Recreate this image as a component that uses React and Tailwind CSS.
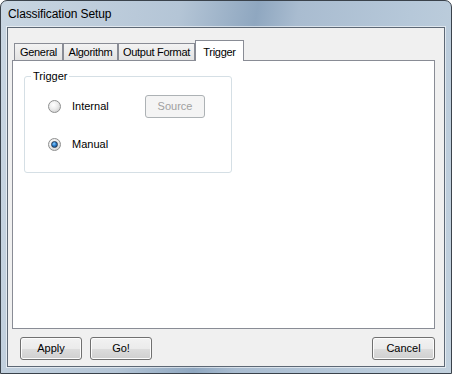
import React from 'react';

const font = { fontFamily: '"Liberation Sans", Arial, sans-serif' };

const Radio = ({ checked }) => (
  <div className="w-[13px] h-[13px] rounded-full border border-[#8e8f8f] bg-[radial-gradient(circle_at_40%_35%,#ffffff_0%,#ececec_45%,#c4c4c4_100%)] flex items-center justify-center shrink-0">
    {checked && (
      <div className="w-[7px] h-[7px] rounded-full border border-[#263a54] bg-[radial-gradient(circle_at_40%_35%,#8fd0ff_0%,#2a7fcf_45%,#0d3a6e_100%)]" />
    )}
  </div>
);

const Button = ({ children, className = '' }) => (
  <button className={`h-[23px] w-[62px] rounded-[3px] border border-[#707070] bg-[linear-gradient(#f2f2f2_0%,#ebebeb_50%,#dddddd_51%,#cfcfcf_100%)] text-[11px] text-black shadow-[inset_0_0_0_1px_#fcfcfc] ${className}`}>
    {children}
  </button>
);

const tabs = [
  { name: 'General', w: 'w-[49px]' },
  { name: 'Algorithm', w: 'w-[55px]' },
  { name: 'Output Format', w: 'w-[77px]' },
];

export default function App() {
  return (
    <div style={font} className="w-[452px] h-[374px] bg-white">
      <div className="w-[452px] h-[374px] rounded-t-[7px] border border-[#3a424b] bg-[linear-gradient(100deg,#c9d6e2_0%,#b4c5d6_35%,#8fa7c0_50%,#a9bcd0_58%,#b6c8d9_80%,#c2d1de_100%)] flex flex-col">
        <div className="h-[26px] pl-[7px] flex items-center text-[12px] text-black tracking-[-0.1px]">
          Classification Setup
        </div>
        <div className="mx-[6px] h-[340px] border border-[#5d6875] bg-[#f0f0f0] shadow-[0_0_0_1px_rgba(255,255,255,0.55)] flex flex-col">
          <div className="mt-[12px] ml-[4px] mr-[9px]">
            <div className="flex items-end pl-[2px] h-[20px]">
              {tabs.map(t => (
                <div
                  key={t.name}
                  className={`${t.w} h-[17px] border border-b-0 border-[#898c95] bg-[linear-gradient(#f3f3f3,#e3e3e3)] text-[11px] tracking-[-0.3px] text-black flex items-center justify-center whitespace-nowrap`}
                >
                  {t.name}
                </div>
              ))}
              <div className="w-[49px] h-[21px] -mb-px relative z-10 border border-b-0 border-[#898c95] bg-white text-[11px] tracking-[-0.3px] text-black flex items-start justify-center pt-[3px]">
                Trigger
              </div>
            </div>
            <div className="h-[269px] border border-[#898c95] bg-white pl-[11px] pt-[15px]">
              <div className="relative w-[208px] h-[97px] rounded-[3px] border border-[#d5dfe5] pl-[23px] pt-[18px]">
                <span className="absolute -top-[8px] left-[6px] bg-white px-[2px] text-[11px] leading-[14px] text-black">
                  Trigger
                </span>
                <div className="flex items-center h-[23px]">
                  <Radio />
                  <span className="ml-[11px] w-[73px] text-[11px] text-black">Internal</span>
                  <button className="h-[23px] w-[60px] rounded-[3px] border border-[#adb2b5] bg-[#f4f4f4] text-[11px] text-[#a0a0a0]">
                    Source
                  </button>
                </div>
                <div className="flex items-center h-[23px] mt-[15px]">
                  <Radio checked />
                  <span className="ml-[11px] text-[11px] text-black">Manual</span>
                </div>
              </div>
            </div>
          </div>
          <div className="mt-[8px] ml-[12px] mr-[9px] flex gap-[8px]">
            <Button>Apply</Button>
            <Button>Go!</Button>
            <Button className="ml-auto w-[63px]">Cancel</Button>
          </div>
        </div>
      </div>
    </div>
  );
}
